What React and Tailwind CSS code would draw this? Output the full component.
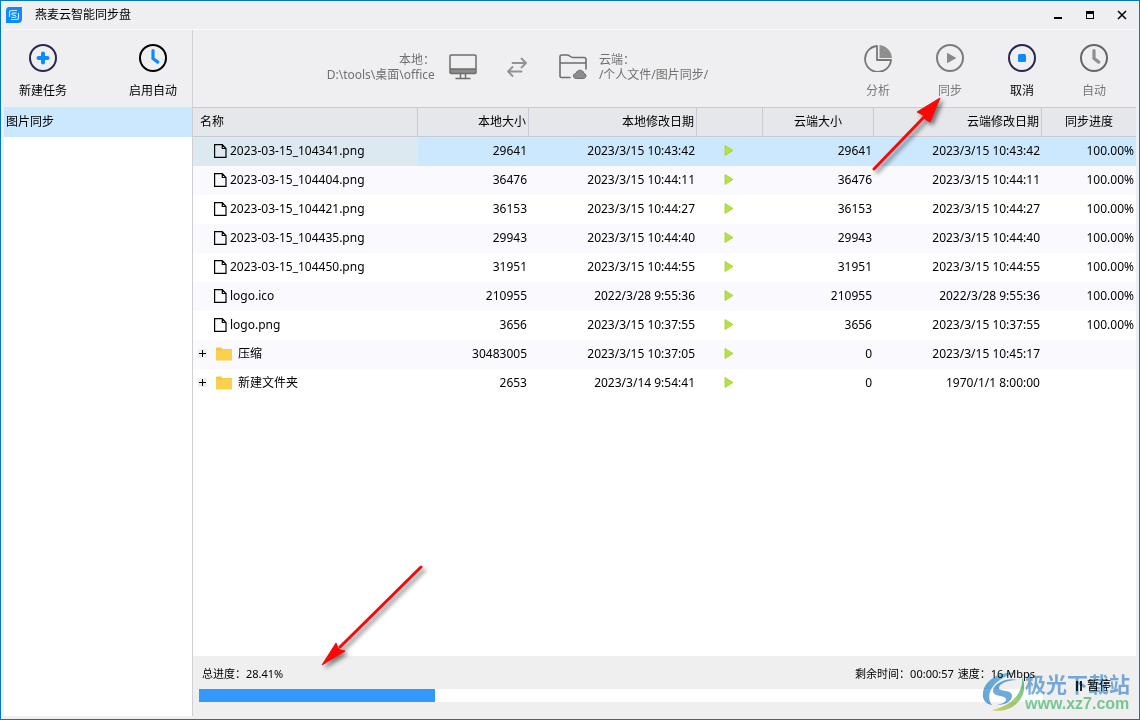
import { useState } from "react";

const files = [
  { name: "2023-03-15_104341.png", size: "29641", date: "2023/3/15 10:43:42", cloud: "29641", cloudDate: "2023/3/15 10:43:42", progress: "100.00%" },
  { name: "2023-03-15_104404.png", size: "36476", date: "2023/3/15 10:44:11", cloud: "36476", cloudDate: "2023/3/15 10:44:11", progress: "100.00%" },
  { name: "2023-03-15_104421.png", size: "36153", date: "2023/3/15 10:44:27", cloud: "36153", cloudDate: "2023/3/15 10:44:27", progress: "100.00%" },
  { name: "2023-03-15_104435.png", size: "29943", date: "2023/3/15 10:44:40", cloud: "29943", cloudDate: "2023/3/15 10:44:40", progress: "100.00%" },
  { name: "2023-03-15_104450.png", size: "31951", date: "2023/3/15 10:44:55", cloud: "31951", cloudDate: "2023/3/15 10:44:55", progress: "100.00%" },
  { name: "logo.ico", size: "210955", date: "2022/3/28 9:55:36", cloud: "210955", cloudDate: "2022/3/28 9:55:36", progress: "100.00%" },
  { name: "logo.png", size: "3656", date: "2023/3/15 10:37:55", cloud: "3656", cloudDate: "2023/3/15 10:37:55", progress: "100.00%" },
  { name: "压缩", folder: true, size: "30483005", date: "2023/3/15 10:37:05", cloud: "0", cloudDate: "2023/3/15 10:45:17", progress: "" },
  { name: "新建文件夹", folder: true, size: "2653", date: "2023/3/14 9:54:41", cloud: "0", cloudDate: "1970/1/1 8:00:00", progress: "" },
];

function AddIcon() {
  return (
    <svg width="28" height="28" viewBox="0 0 28 28" fill="none">
      <circle cx="14" cy="14" r="13" stroke="#2b2850" strokeWidth="2" />
      <path d="M14 9.5v9M9.5 14h9" stroke="#0a8cff" strokeWidth="4" strokeLinecap="round" />
    </svg>
  );
}

function ClockIcon({ ring, hand }) {
  return (
    <svg width="28" height="28" viewBox="0 0 28 28" fill="none">
      <circle cx="14" cy="14" r="13" stroke={ring} strokeWidth="2" />
      <path d="M14 6.5v8l4.8 3.6" stroke={hand} strokeWidth="3.2" strokeLinecap="round" />
    </svg>
  );
}

function PieIcon() {
  return (
    <svg width="28" height="28" viewBox="0 0 28 28" fill="none">
      <path d="M13 2A13 13 0 1 0 27 16H13Z" stroke="#777" strokeWidth="1.8" strokeLinejoin="round" />
      <path d="M15.5 1C22 1.4 27.4 7 28 14H15.500Z" fill="#8f8f8f" />
    </svg>
  );
}

function PlayIcon() {
  return (
    <svg width="28" height="28" viewBox="0 0 28 28" fill="none">
      <circle cx="14" cy="14" r="13" stroke="#7c7c7c" strokeWidth="2" />
      <path d="M11.500 9.500v9l8-4.500z" fill="#888" stroke="#888" strokeLinejoin="round" />
    </svg>
  );
}

function StopIcon() {
  return (
    <svg width="28" height="28" viewBox="0 0 28 28" fill="none">
      <circle cx="14" cy="14" r="13" stroke="#2b2850" strokeWidth="2" />
      <rect x="10" y="10" width="8" height="8" rx="1.500" fill="#0a8cff" />
    </svg>
  );
}

function MonitorIcon() {
  return (
    <svg width="28" height="26" viewBox="0 0 28 26" fill="none" stroke="#6e6e6e">
      <path d="M1 15h26v3.500a1 1 0 0 1-1 1H2a1 1 0 0 1-1-1z" fill="#8c8c8c" stroke="none" />
      <rect x="1" y="1" width="26" height="18.500" rx="1" strokeWidth="1.500" />
      <path d="M1 15h26M11.500 20v4M16.500 20v4M6.500 24.500h15" strokeWidth="1.500" />
    </svg>
  );
}

function SwapIcon() {
  return (
    <svg width="20" height="20" viewBox="0 0 20 20" fill="none" stroke="#929292" strokeWidth="1.800" strokeLinecap="round" strokeLinejoin="round">
      <path d="M5.500 6H19M14.500 1.500L19 6l-4.500 4.500M14.500 14.500H1M5.500 10L1 14.500 5.500 19" />
    </svg>
  );
}

function CloudFolderIcon() {
  return (
    <svg width="28" height="26" viewBox="0 0 28 26" fill="none" stroke="#6e6e6e" strokeWidth="1.600" strokeLinecap="round" strokeLinejoin="round">
      <path d="M11 23.500H2.500A1.500 1.500 0 0 1 1 22V2.500C1 1.500 1.500 1 2.500 1H8c3 0 3 2.500 6 2.500h11c1.500 0 2 .5 2 2V15M1 9h26" />
      <path d="M17 24.500c-3.500 0-3.500-5 0-5 1-4.500 7-4.500 8 0 3 .5 2.500 5-.5 5z" fill="#8c8c8c" strokeWidth="1" />
    </svg>
  );
}

function FileIcon() {
  return (
    <svg className="shrink-0" width="13" height="14" viewBox="0 0 13 14" fill="none" stroke="#000">
      <path d="M.6.600H8.300L12 4.500v8.900H.6zM8.300.6v3.900H12" strokeWidth="1.200" />
    </svg>
  );
}

function FolderIcon() {
  return (
    <svg className="shrink-0" width="16" height="14" viewBox="0 0 16 14">
      <path d="M0 1.500Q0 .5 1 .5h4l1.500 1.500H15q1 0 1 1V13H0z" fill="#f5c53a" />
      <path d="M0 3.500h5.500L7 2.500h9V13.500H0z" fill="#fbd04c" />
    </svg>
  );
}

function Arrow({ className, points, line, width, height }) {
  return (
    <svg
      className={className}
      width={width}
      height={height}
      viewBox={`0 0 ${width} ${height}`}
      overflow="visible"
    >
      <g stroke="#fa0808" fill="#fa0808">
        <path d={line} strokeWidth="3" strokeLinecap="round" />
        <path d={points} strokeWidth="1" strokeLinejoin="round" />
      </g>
    </svg>
  );
}

function ToolButton({ icon, label, disabled, className }) {
  return (
    <button
      type="button"
      disabled={disabled}
      className={`flex flex-col items-center gap-[11px] pt-3.5 leading-4 disabled:text-[#777777] ${className}`}
    >
      {icon}
      <span>{label}</span>
    </button>
  );
}

function TitleBar() {
  return (
    <header className="flex h-7 shrink-0 items-center pr-px pl-[5px]">
      <svg width="16" height="16" viewBox="0 0 16 16" fill="none">
        <path d="M3 0h13v12q0 4-4 4H0V4q0-4 3-4z" fill="#0a8cff" />
        <path d="M11 3.500H5.500Q3.500 3.500 3.500 5.500V10M5 12.500h5.500q2 0 2-2V6" stroke="#c9e6ff" strokeWidth="1.200" />
        <path d="M10.500 6H7Q5.500 6 5.800 7.200T8 8.200t2 1.200-1.500 1H5.500" stroke="#fff" strokeWidth="1" />
      </svg>
      <h1 className="ml-[13px] flex-1">燕麦云智能同步盘</h1>
      <div className="flex">
        <button type="button" aria-label="最小化" className="flex h-7 w-8 items-center justify-center">
          <svg width="10" height="10" viewBox="0 0 10 10"><path d="M1 7h8v2H1z" /></svg>
        </button>
        <button type="button" aria-label="最大化" className="flex h-7 w-8 items-center justify-center">
          <svg width="10" height="10" viewBox="0 0 10 10"><path d="M1 1h8v8H1zM2 4v4h6V4z" fillRule="evenodd" /></svg>
        </button>
        <button type="button" aria-label="关闭" className="flex h-7 w-8 items-center justify-center">
          <svg width="10" height="10" viewBox="0 0 10 10" stroke="#000" strokeWidth="1.500"><path d="M1 1l8 8M9 1L1 9" /></svg>
        </button>
      </div>
    </header>
  );
}

function FileTable() {
  const [selected, setSelected] = useState(0);
  const head = "h-[30px] border-y border-r border-[#c9cad8] bg-[#e6e7eb] font-normal last:border-r-0";
  const cell = "p-0 pr-0.5 pb-0.5 text-right";
  return (
    <table className="w-full table-fixed border-separate border-spacing-0 whitespace-nowrap">
      <colgroup>
        <col />
        <col className="w-[111px]" />
        <col className="w-[168px]" />
        <col className="w-[66px]" />
        <col className="w-[111px]" />
        <col className="w-[168px]" />
        <col className="w-[94px]" />
      </colgroup>
      <thead>
        <tr>
          <th className={`${head} pl-[7px] text-left`}>名称</th>
          <th className={`${head} pr-0.5 text-right`}>本地大小</th>
          <th className={`${head} pr-0.5 text-right`}>本地修改日期</th>
          <th className={head}></th>
          <th className={`${head} text-center`}>云端大小</th>
          <th className={`${head} pr-0.5 text-right`}>云端修改日期</th>
          <th className={`${head} text-center`}>同步进度</th>
        </tr>
      </thead>
      <tbody>
        {files.map((el, index) => (
          <tr
            key={index}
            className={index === selected ? "bg-[#cce8ff]" : "even:bg-[#f9f9fe]"}
            onClick={() => setSelected(index)}
          >
            <td className={`h-[29px] p-0 pb-0.5 ${index === selected ? "bg-[#dde9f0]" : ""}`}>
              {el.folder ? (
                <div className="flex items-center pl-[5px]">
                  <button type="button" aria-label="展开" className="mr-[9px] flex h-[9px] w-[9px] items-center justify-center bg-[#eeeeee]">
                    <svg width="9" height="9" viewBox="0 0 9 9" stroke="#000"><path d="M4.500 1v7M1 4.500h7" /></svg>
                  </button>
                  <FolderIcon />
                  <span className="ml-1.5">{el.name}</span>
                </div>
              ) : (
                <div className="flex items-center gap-[3px] pl-[21px]">
                  <FileIcon />
                  <span>{el.name}</span>
                </div>
              )}
            </td>
            <td className={cell}>{el.size}</td>
            <td className={cell}>{el.date}</td>
            <td className={cell}>
              <svg className="mx-auto" width="10" height="11" viewBox="0 0 10 11">
                <path d="M1 .5v10l8-5z" fill="#b5e04a" stroke="#9fd42a" strokeWidth=".8" />
              </svg>
            </td>
            <td className={cell}>{el.cloud}</td>
            <td className={cell}>{el.cloudDate}</td>
            <td className={cell}>{el.progress}</td>
          </tr>
        ))}
      </tbody>
    </table>
  );
}

function StatusBar() {
  const done = 28;
  return (
    <footer className="flex h-[60px] shrink-0 items-start bg-[#efefef] pt-2.5 pl-1.5 text-[11px] leading-4">
      <div className="flex-1">
        <div className="flex justify-between pr-2 pl-[3px]">
          <span>总进度：28.41%</span>
          <span className="flex gap-1">
            <span>剩余时间：00:00:57</span>
            <span>速度：16 Mbps</span>
          </span>
        </div>
        <div role="progressbar" aria-label="总进度" aria-valuenow={done} className="mt-[7px] h-[13px] bg-white">
          <div className="h-full bg-[#3399ff]" style={{ width: `${done}%` }} />
        </div>
      </div>
      <button type="button" className="flex w-[93px] items-center gap-1 pt-3 pl-8 text-xs leading-4">
        <svg width="8" height="12" viewBox="0 0 8 12"><path d="M1 1h2v10H1zM5 1h2v10H5z" fill="#222" /></svg>
        暂停
      </button>
    </footer>
  );
}

function Watermark() {
  return (
    <div className="pointer-events-none absolute right-[9px] bottom-1.5 flex items-center gap-px opacity-80 mix-blend-multiply">
      <svg width="42" height="42" viewBox="0 0 42 42">
        <defs>
          <linearGradient id="swooshBlue" x1="1" y1="0" x2="0" y2="1">
            <stop offset="0" stopColor="#4fc0ee" />
            <stop offset="1" stopColor="#3f86cc" />
          </linearGradient>
          <linearGradient id="swooshGreen" x1="1" y1="0" x2="0" y2="1">
            <stop offset="0" stopColor="#35b36c" />
            <stop offset="1" stopColor="#e0d43c" />
          </linearGradient>
        </defs>
        <path d="M33 2C17 0 2 10 1 22c-1 7 3 11 9 12C3 25 9 9 33 2z" fill="url(#swooshBlue)" />
        <path d="M35 9C24 6 11 13 11 20c0 6 12 4 13 8 .5 3-4 5-9 6 9 0 15-4 15-9 0-7-13-4-13-8 0-4 8-8 18-8z" fill="#4a96d4" />
        <path d="M40 6c2 14-9 29-30 33 15 4 31-7 32-21 .3-5-.5-9-2-12z" fill="url(#swooshGreen)" />
      </svg>
      <div>
        <div className="text-[21px] leading-6 font-bold text-[#5b9fdc]">极光下载站</div>
        <div className="font-['Liberation_Sans',sans-serif] text-base leading-4 font-bold text-[#5fc886]">www.xz7.com</div>
      </div>
    </div>
  );
}

export default function App() {
  return (
    <div className="relative flex min-h-screen cursor-default flex-col border border-[#0078c8] bg-[#efeff1] font-['Noto_Sans','Noto_Sans_CJK_SC',sans-serif] text-xs text-black">
      <TitleBar />
      <div className="mx-[3px] mb-[3px] flex flex-1 border-t border-[#fafafa]">
        <aside className="flex w-[189px] shrink-0 flex-col border-r border-[#cfcfd1]">
          <div className="flex h-[77px] justify-between">
            <ToolButton className="w-[78px]" icon={<AddIcon />} label="新建任务" />
            <ToolButton className="w-[78px]" icon={<ClockIcon ring="#000" hand="#0a8cff" />} label="启用自动" />
          </div>
          <nav className="flex-1 bg-white">
            <a href="#task" className="flex h-[30px] items-center bg-[#cce8ff] pl-0.5">图片同步</a>
          </nav>
        </aside>
        <main className="flex min-w-0 flex-1 flex-col">
          <div className="flex h-[77px] shrink-0 pr-1.5">
            <div className="flex flex-1 items-center justify-center pb-1 leading-[15px] text-[#707070]">
              <p className="mr-3.5 text-right">本地：<br />D:\tools\桌面\office</p>
              <MonitorIcon />
              <span className="mr-8 ml-[30px]"><SwapIcon /></span>
              <CloudFolderIcon />
              <p className="ml-3">云端：<br />/个人文件/图片同步/</p>
            </div>
            <ToolButton className="w-18" icon={<PieIcon />} label="分析" disabled />
            <ToolButton className="w-18" icon={<PlayIcon />} label="同步" disabled />
            <ToolButton className="w-18" icon={<StopIcon />} label="取消" />
            <ToolButton className="w-18" icon={<ClockIcon ring="#666" hand="#8f8f8f" />} label="自动" disabled />
          </div>
          <div className="flex-1 bg-white">
            <FileTable />
          </div>
          <StatusBar />
        </main>
      </div>
      <Watermark />
      {/* annotation arrows over the window */}
      <Arrow
        className="pointer-events-none absolute top-24 right-[197px] drop-shadow-[3px_3px_2px_rgba(0,0,0,0.5)]"
        width={70}
        height={74}
        line="M2 72L54 18"
        points="M68 1L45 15L51 18L53 22L58 25Z"
      />
      <Arrow
        className="pointer-events-none absolute bottom-[53px] left-80 drop-shadow-[3px_3px_2px_rgba(0,0,0,0.5)]"
        width={102}
        height={100}
        line="M100 1L19 81"
        points="M1 99L15 77L17 82L19 84L24 85Z"
      />
    </div>
  );
}
